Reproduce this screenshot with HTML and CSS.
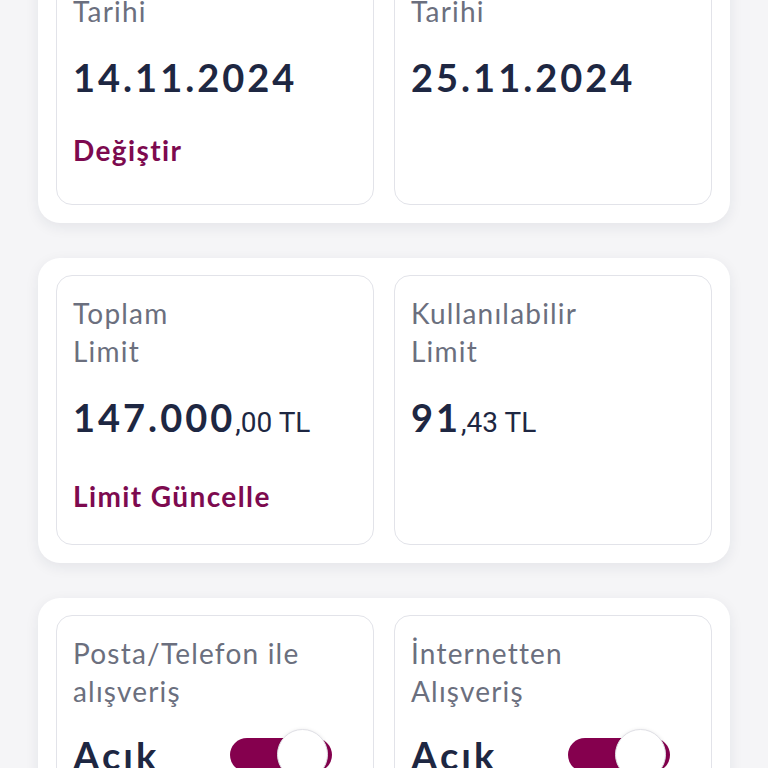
FILE: index.html
```html
<!DOCTYPE html>
<html lang="tr">
<head>
    <meta charset="UTF-8">
    <meta name="viewport" content="width=device-width, initial-scale=1.0">
    <title>Kart Detayı</title>
    <link rel="stylesheet" href="styles.css">
</head>
<body>
    <div class="page">
        <div class="panel">
            <div class="tile">
                <div class="tile-label">Hesap Kesim<br>Tarihi</div>
                <div class="tile-value">14.11.2024</div>
                <a class="tile-link" href="#">Değiştir</a>
            </div>
            <div class="tile">
                <div class="tile-label">Son Ödeme<br>Tarihi</div>
                <div class="tile-value">25.11.2024</div>
            </div>
        </div>

        <div class="panel">
            <div class="tile">
                <div class="tile-label">Toplam<br>Limit</div>
                <div class="tile-value">147.000<span class="decimals">,00 TL</span></div>
                <a class="tile-link" href="#">Limit Güncelle</a>
            </div>
            <div class="tile">
                <div class="tile-label">Kullanılabilir<br>Limit</div>
                <div class="tile-value">91<span class="decimals">,43 TL</span></div>
            </div>
        </div>

        <div class="panel">
            <div class="tile">
                <div class="tile-label">Posta/Telefon ile<br>alışveriş</div>
                <div class="switch-row">
                    <span class="tile-value state">Açık</span>
                    <span class="toggle on"><span class="knob"></span></span>
                </div>
            </div>
            <div class="tile">
                <div class="tile-label">İnternetten<br>Alışveriş</div>
                <div class="switch-row">
                    <span class="tile-value state">Açık</span>
                    <span class="toggle on"><span class="knob"></span></span>
                </div>
            </div>
        </div>
    </div>
</body>
</html>
```

FILE: styles.css
```css
* {
    margin: 0;
    padding: 0;
    box-sizing: border-box;
}

body {
    font-family: 'Lato', 'Noto Sans', sans-serif;
    background: #f5f5f7;
    overflow: hidden;
}

.page {
    margin-top: -82px;
    padding: 0 38px;
}

.panel {
    background: #fff;
    border-radius: 22px;
    padding: 17px 18px 18px;
    margin-bottom: 35px;
    box-shadow: 0 4px 14px rgba(30, 39, 66, 0.08);
    display: grid;
    grid-template-columns: 1fr 1fr;
    gap: 20px;
}

.tile {
    border: 1.5px solid #e2e3e9;
    border-radius: 16px;
    padding: 18px 16px 16px;
    height: 270px;
}

.tile-label {
    color: #6b6f7e;
    font-size: 28px;
    line-height: 38px;
    letter-spacing: 1.2px;
}

.tile-value {
    display: block;
    margin-top: 24px;
    color: #1e2742;
    font-size: 38px;
    font-weight: 700;
    line-height: 46px;
    letter-spacing: 3px;
}

.decimals {
    font-family: 'Roboto', 'Liberation Sans', sans-serif;
    font-size: 28px;
    font-weight: 400;
    letter-spacing: 0;
}

.tile-link {
    display: block;
    margin-top: 31px;
    color: #7d0a4f;
    font-size: 28px;
    font-weight: 700;
    line-height: 38px;
    text-decoration: none;
    letter-spacing: 1.4px;
}

.switch-row {
    display: flex;
    align-items: center;
    margin-top: 22px;
}

.switch-row .state {
    margin-top: 0;
    width: 157px;
}

.toggle {
    position: relative;
    width: 102px;
    height: 34px;
    border-radius: 17px;
    background: #ccc;
}

.toggle.on {
    background: #85004e;
}

.knob {
    position: absolute;
    right: 4px;
    top: -9px;
    width: 51px;
    height: 51px;
    border-radius: 50%;
    background: #fff;
    border: 1px solid #e0e0e6;
    box-shadow: 0 1px 4px rgba(0, 0, 0, 0.12);
}
```
